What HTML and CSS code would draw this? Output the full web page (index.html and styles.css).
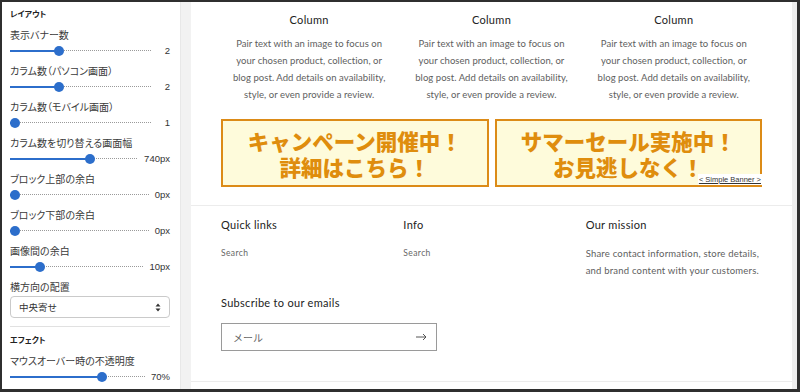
FILE: index.html
```html
<!DOCTYPE html>
<html lang="ja">
  <head>
    <meta charset="utf-8" />
    <meta name="viewport" content="width=device-width, initial-scale=1" />
    <title>Simple Banner - 設定</title>
    <link rel="stylesheet" href="styles.css">
  </head>
  <body>
    <div class="frame">
      <aside class="panel">
        <h4 class="panel-title">レイアウト</h4>

        <div class="field">
          <div class="field-label">表示バナー数</div>
          <div class="range" style="--v: 0.333">
            <div class="range-track"><span class="range-fill"></span><span class="range-thumb"></span></div>
            <span class="range-value">2</span>
          </div>
        </div>

        <div class="field">
          <div class="field-label">カラム数（パソコン画面）</div>
          <div class="range" style="--v: 0.333">
            <div class="range-track"><span class="range-fill"></span><span class="range-thumb"></span></div>
            <span class="range-value">2</span>
          </div>
        </div>

        <div class="field">
          <div class="field-label">カラム数（モバイル画面）</div>
          <div class="range" style="--v: 0">
            <div class="range-track"><span class="range-fill"></span><span class="range-thumb"></span></div>
            <span class="range-value">1</span>
          </div>
        </div>

        <div class="field">
          <div class="field-label">カラム数を切り替える画面幅</div>
          <div class="range" style="--v: 0.633">
            <div class="range-track"><span class="range-fill"></span><span class="range-thumb"></span></div>
            <span class="range-value">740px</span>
          </div>
        </div>

        <div class="field">
          <div class="field-label">ブロック上部の余白</div>
          <div class="range" style="--v: 0">
            <div class="range-track"><span class="range-fill"></span><span class="range-thumb"></span></div>
            <span class="range-value">0px</span>
          </div>
        </div>

        <div class="field">
          <div class="field-label">ブロック下部の余白</div>
          <div class="range" style="--v: 0">
            <div class="range-track"><span class="range-fill"></span><span class="range-thumb"></span></div>
            <span class="range-value">0px</span>
          </div>
        </div>

        <div class="field">
          <div class="field-label">画像間の余白</div>
          <div class="range" style="--v: 0.2">
            <div class="range-track"><span class="range-fill"></span><span class="range-thumb"></span></div>
            <span class="range-value">10px</span>
          </div>
        </div>

        <div class="field-label">横方向の配置</div>
        <div class="select">
          <span>中央寄せ</span>
          <svg class="select-arrows" width="6" height="9" viewBox="0 0 6 9">
            <path d="M3 0.5 L5.5 3.5 H0.5 Z M3 8.5 L5.5 5.5 H0.5 Z" fill="#333" />
          </svg>
        </div>

        <hr class="divider" />

        <h4 class="panel-title">エフェクト</h4>
        <div class="field">
          <div class="field-label">マウスオーバー時の不透明度</div>
          <div class="range" style="--v: 0.7">
            <div class="range-track"><span class="range-fill"></span><span class="range-thumb"></span></div>
            <span class="range-value">70%</span>
          </div>
        </div>
      </aside>

      <div class="gutter"></div>

      <main class="preview">
        <section class="columns">
          <div class="column">
            <h3>Column</h3>
            <p>Pair text with an image to focus on<br />your chosen product, collection, or<br />blog post. Add details on availability,<br />style, or even provide a review.</p>
          </div>
          <div class="column">
            <h3>Column</h3>
            <p>Pair text with an image to focus on<br />your chosen product, collection, or<br />blog post. Add details on availability,<br />style, or even provide a review.</p>
          </div>
          <div class="column">
            <h3>Column</h3>
            <p>Pair text with an image to focus on<br />your chosen product, collection, or<br />blog post. Add details on availability,<br />style, or even provide a review.</p>
          </div>
        </section>

        <section class="banners">
          <a class="banner" href="#">
            <span class="banner-line">キャンペーン開催中！</span>
            <span class="banner-line">詳細はこちら！</span>
          </a>
          <a class="banner" href="#">
            <span class="banner-line">サマーセール実施中！</span>
            <span class="banner-line">お見逃しなく！</span>
            <span class="banner-tag">&lt; Simple Banner &gt;</span>
          </a>
        </section>

        <footer class="footer">
          <div class="footer-grid">
            <div>
              <h4>Quick links</h4>
              <a class="footer-link" href="#">Search</a>
            </div>
            <div>
              <h4>Info</h4>
              <a class="footer-link" href="#">Search</a>
            </div>
            <div>
              <h4>Our mission</h4>
              <p>Share contact information, store details,<br />and brand content with your customers.</p>
            </div>
          </div>

          <h4 class="subscribe-title">Subscribe to our emails</h4>
          <div class="newsletter">
            <span class="newsletter-placeholder">メール</span>
            <svg width="11" height="8" viewBox="0 0 11 8">
              <path d="M0 4 H10 M7 1 L10 4 L7 7" fill="none" stroke="#444" stroke-width="0.9" />
            </svg>
          </div>
        </footer>
      </main>

      <div class="scroll-edge"></div>
    </div>
  </body>
</html>
```

FILE: styles.css
```css
body {
  margin: 0;
  font-family: "Liberation Sans", "Noto Sans CJK JP", sans-serif;
}

.frame {
  display: flex;
  height: 392px;
  box-sizing: border-box;
  border: 2px solid #2f2f2f;
  border-right-width: 3px;
  border-bottom-width: 3px;
  background-color: #fff;
  overflow: hidden;
}

/* settings panel */

.panel {
  width: 178px;
  flex: none;
  box-sizing: border-box;
  padding: 6px 10px 0 8px;
  color: #3a3a3a;
}

.panel-title {
  margin: 0 0 6px;
  font-size: 8px;
  line-height: 14px;
  font-weight: 700;
  font-feature-settings: "palt";
  color: #222;
}

.field {
  margin-bottom: 6px;
}

.field-label {
  font-size: 10px;
  line-height: 15px;
  font-feature-settings: "palt";
}

.range {
  display: flex;
  align-items: center;
  gap: 6px;
  height: 15px;
}

.range-track {
  flex: 1;
  position: relative;
  height: 10px;
  background: repeating-linear-gradient(to right, #9a9a9a 0 1px, transparent 1px 2px) no-repeat;
  background-size: 100% 1px;
  background-position: 0 4.5px;
}

.range-fill {
  position: absolute;
  left: 0;
  top: 4px;
  height: 2px;
  width: calc(5px + var(--v) * (100% - 10px));
  background-color: #2c6ecb;
}

.range-thumb {
  position: absolute;
  top: 0;
  left: calc(var(--v) * (100% - 10px));
  width: 10px;
  height: 10px;
  border-radius: 50%;
  background-color: #2c6ecb;
}

.range-value {
  min-width: 12px;
  text-align: right;
  font-size: 9.5px;
  color: #333;
}

.select {
  display: flex;
  align-items: center;
  justify-content: space-between;
  margin-top: 1px;
  height: 22px;
  box-sizing: border-box;
  padding: 0 8px;
  border: 1px solid #cacaca;
  border-radius: 4px;
  font-size: 9.5px;
  color: #333;
}

.divider {
  margin: 8px 0 7px;
  border: 0;
  border-top: 1px solid #e1e1e1;
}

.gutter {
  width: 10px;
  flex: none;
  background-color: #f2f2f2;
  border-left: 1px solid #e8e8e8;
}

.scroll-edge {
  width: 5px;
  flex: none;
  background-color: #eeeeee;
}

/* store preview */

.preview {
  flex: 1;
  min-width: 0;
  font-family: "Lato", "Liberation Sans", sans-serif;
  color: #222;
}

.columns {
  display: grid;
  grid-template-columns: repeat(3, 1fr);
  gap: 6px;
  padding: 10px 30px 0;
  text-align: center;
}

.column h3 {
  margin: 0 0 6.5px;
  font-size: 11px;
  line-height: 16px;
  font-weight: 400;
  letter-spacing: 0.3px;
}

.column p {
  margin: 0;
  font-size: 9.5px;
  line-height: 17px;
  letter-spacing: 0.05px;
  color: #5e5e5e;
  white-space: nowrap;
}

.banners {
  display: grid;
  grid-template-columns: 1fr 1fr;
  gap: 6px;
  padding: 16.5px 30px 18px;
}

.banner {
  position: relative;
  display: flex;
  flex-direction: column;
  align-items: center;
  justify-content: center;
  height: 68px;
  box-sizing: border-box;
  padding-top: 1px;
  border: 2px solid #dc8b17;
  background-color: #fefbdb;
  color: #df8d0d;
  font-family: "Noto Sans CJK JP", sans-serif;
  font-size: 21.5px;
  font-weight: 900;
  text-align: center;
  text-decoration: none;
}

.banner-line {
  display: block;
  height: 26px;
  line-height: 26px;
}

.banner-tag {
  position: absolute;
  right: -2px;
  bottom: 0;
  padding: 0 1px;
  background-color: #fff;
  font-family: "Liberation Sans", sans-serif;
  font-size: 7.5px;
  line-height: 11px;
  font-weight: 400;
  color: #333;
  text-decoration: underline;
}

.footer {
  padding: 11px 30px 30px;
  border-top: 1px solid #ececec;
  border-bottom: 1px solid #ececec;
}

.footer-grid {
  display: grid;
  grid-template-columns: repeat(3, 1fr);
  gap: 6px;
}

.footer h4 {
  margin: 0 0 11.5px;
  font-size: 11px;
  line-height: 16px;
  font-weight: 400;
  letter-spacing: 0.3px;
}

.footer-link {
  display: block;
  font-size: 8.5px;
  line-height: 17px;
  letter-spacing: 0.4px;
  color: #666;
  text-decoration: none;
}

.footer p {
  margin: 0;
  font-size: 9.5px;
  line-height: 17px;
  letter-spacing: 0.2px;
  color: #5e5e5e;
  white-space: nowrap;
}

.footer .subscribe-title {
  margin: 16.5px 0 12px;
}

.newsletter {
  display: flex;
  align-items: center;
  justify-content: space-between;
  width: 216px;
  height: 28px;
  box-sizing: border-box;
  padding: 0 9px 0 11px;
  border: 1px solid #9a9a9a;
}

.newsletter-placeholder {
  font-family: "Noto Sans CJK JP", sans-serif;
  font-size: 10px;
  color: #666;
}
```
